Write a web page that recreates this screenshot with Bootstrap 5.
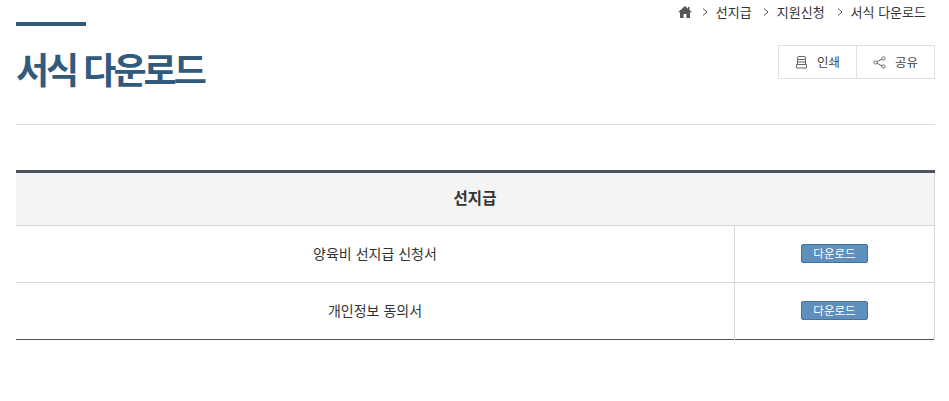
<!DOCTYPE html>
<html lang="ko">
<head>
<meta charset="utf-8">
<title>서식 다운로드</title>
<link href="https://cdn.jsdelivr.net/npm/bootstrap@5.3.0/dist/css/bootstrap.min.css" rel="stylesheet">
<style>
body{font-family:"Noto Sans CJK KR","Liberation Sans",sans-serif;color:#333;background:#fff;}
.page-wrap{width:919px;margin-left:16px;}
.head-zone{height:125px;border-bottom:1px solid #e0e0e0;}
.crumbs{top:3px;right:9px;font-size:13px;line-height:18px;color:#333;}
.crumbs .sep{display:flex;margin:0 8px 0 11px;}
.crumbs .sep.first{margin-left:10px;}
.crumbs .sep.wide{margin-left:12px;}
.top-bar{width:70px;height:4px;background:#325a7d;top:22px;left:0;}
.page-title{top:43px;left:0;font-size:36px;font-weight:700;line-height:50px;color:#325a7d;letter-spacing:-3px;margin:0;}
.tools{top:45px;right:0;height:34px;border:1px solid #e0e0e0;}
.tool-item{width:77px;font-size:12.5px;color:#444;gap:9px;}
.tool-item+.tool-item{width:78px;border-left:1px solid #e0e0e0;}
.data-table{margin-top:45px;width:100%;table-layout:fixed;border-collapse:collapse;border-top:3px solid #4c5560;border-bottom:1px solid #4c5560;font-size:14px;}
.data-table th{height:54px;background:#f4f4f4;text-align:center;font-size:15.5px;font-weight:700;border-bottom:1px solid #d6d6d6;border-right:1px solid #d6d6d6;color:#333;padding:0 0 3px;}
.data-table td{height:57px;text-align:center;padding:0 0 2px;border-bottom:1px solid #d6d6d6;}
.data-table tr:last-child td{border-bottom:0;}
.data-table .act{border-left:1px solid #d6d6d6;border-right:1px solid #d6d6d6;padding-bottom:4px;}
.col-act{width:200px;}
.dl-btn{display:inline-block;width:67px;height:19px;line-height:16px;font-size:11.5px;color:#fff;background:#5e8fbd;border:1px solid #44739c;border-radius:2px;text-decoration:none;vertical-align:middle;padding:0;}
</style>
</head>
<body>
<div class="page-wrap">
  <div class="head-zone position-relative">
    <div class="crumbs position-absolute d-flex align-items-center">
      <svg width="14" height="12" viewBox="0 0 14 12" aria-hidden="true"><path fill="#555" d="M7 0 L0 6.2 H2 V12 H5.6 V8 H8.4 V12 H12 V6.2 H14 L11.5 4 V1 H10 V2.7 Z"/></svg>
      <span class="sep first"><svg width="6" height="8" viewBox="0 0 6 8"><path d="M1 .5 5 4 1 7.5" fill="none" stroke="#555"/></svg></span>
      <span>선지급</span>
      <span class="sep"><svg width="6" height="8" viewBox="0 0 6 8"><path d="M1 .5 5 4 1 7.5" fill="none" stroke="#555"/></svg></span>
      <span>지원신청</span>
      <span class="sep wide"><svg width="6" height="8" viewBox="0 0 6 8"><path d="M1 .5 5 4 1 7.5" fill="none" stroke="#555"/></svg></span>
      <span>서식 다운로드</span>
    </div>
    <div class="top-bar position-absolute"></div>
    <h1 class="page-title position-absolute">서식 다운로드</h1>
    <div class="tools position-absolute d-flex">
      <div class="tool-item d-flex align-items-center justify-content-center">
        <svg width="13" height="13" viewBox="0 0 13 13" fill="none" stroke="#666"><path d="M2.5 8V2a1.5 1.5 0 0 1 1.5-1.500h5A1.500 1.500 0 0 1 10.500 2V8M2.500 3.500h8M2.500 6h8M1.500 8.500h10v3.500h-10z"/></svg>
        <span>인쇄</span>
      </div>
      <div class="tool-item d-flex align-items-center justify-content-center">
        <svg width="13" height="13" viewBox="0 0 13 13" fill="none" stroke="#666"><circle cx="2.500" cy="6.500" r="1.600"/><circle cx="10.500" cy="2.500" r="1.600"/><circle cx="10.500" cy="10.500" r="1.600"/><path d="M4 5.700 9 3.200M4 7.300 9 9.800"/></svg>
        <span>공유</span>
      </div>
    </div>
  </div>
  <table class="data-table">
    <colgroup><col><col class="col-act"></colgroup>
    <thead><tr><th colspan="2">선지급</th></tr></thead>
    <tbody>
      <tr><td>양육비 선지급 신청서</td><td class="act"><a class="dl-btn" href="#">다운로드</a></td></tr>
      <tr><td>개인정보 동의서</td><td class="act"><a class="dl-btn" href="#">다운로드</a></td></tr>
    </tbody>
  </table>
</div>
<script src="https://cdn.jsdelivr.net/npm/bootstrap@5.3.0/dist/js/bootstrap.bundle.min.js"></script>
</body>
</html>
